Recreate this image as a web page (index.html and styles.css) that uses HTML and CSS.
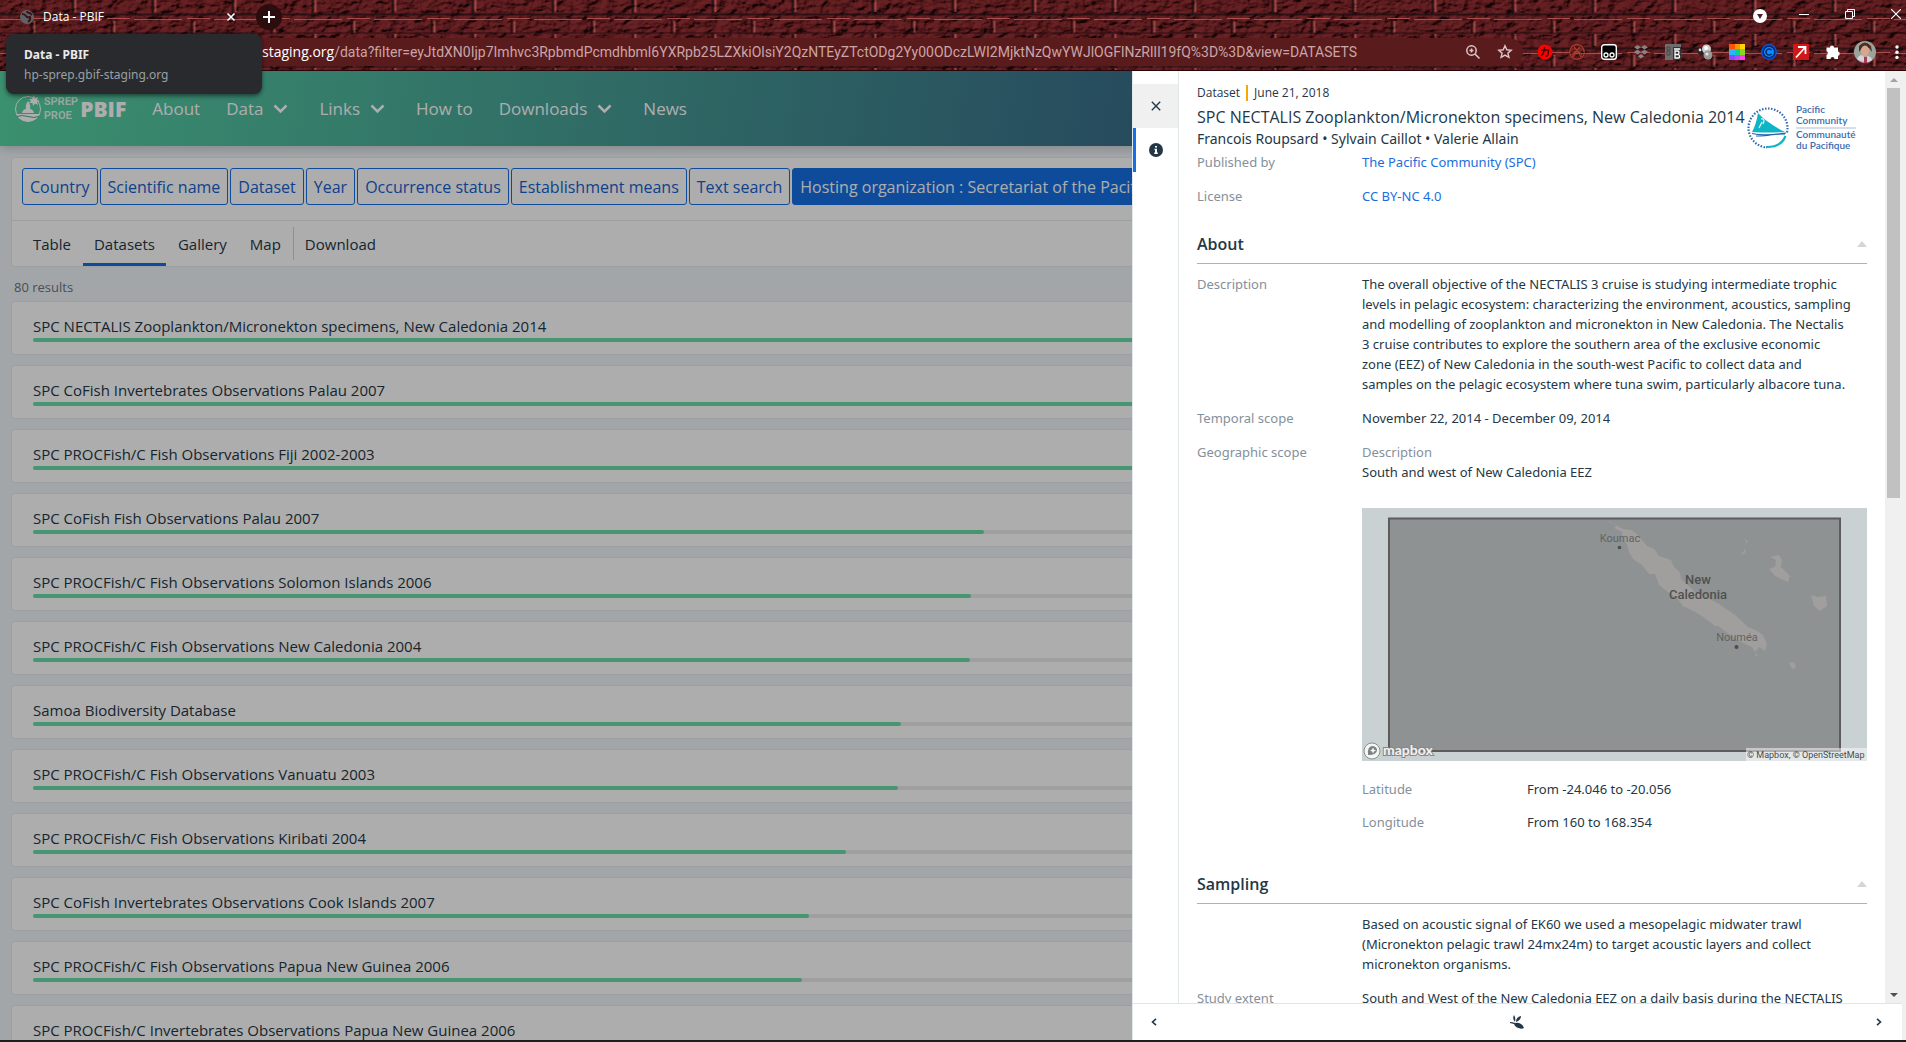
FILE: index.html
```html
<!DOCTYPE html>
<html lang="en">
<head>
<meta charset="utf-8">
<title>Data - PBIF</title>
<link rel="stylesheet" href="styles.css">
</head>
<body>
<header class="browser">
  <svg class="bricks" aria-hidden="true">
    <defs>
      <filter id="grain" x="0" y="0" width="100%" height="100%">
        <feTurbulence type="fractalNoise" baseFrequency="0.09 0.16" numOctaves="3" seed="4" result="n"/>
        <feDiffuseLighting in="n" surfaceScale="5" diffuseConstant="1" lighting-color="#76262a">
          <feDistantLight azimuth="225" elevation="42"/>
        </feDiffuseLighting>
      </filter>
      <pattern id="wall" width="80" height="34" patternUnits="userSpaceOnUse">
        <path d="M0 14.500H80M72.500 0V14M31.500 19V34" stroke="#1c0b10" stroke-width="2" opacity=".75"/>
        <path d="M0 19.500H22M27 18.500H50M54 19.500H80" stroke="#c0605c" stroke-width="1" opacity=".75"/>
        <path d="M75.500 0V12M34.500 21V33" stroke="#c0605c" stroke-width="2" opacity=".6"/>
        <path d="M0 33H80" stroke="#1c0b10" stroke-width="2" opacity=".4"/>
      </pattern>
    </defs>
    <rect width="100%" height="100%" fill="#4c1719"/>
    <rect width="100%" height="100%" filter="url(#grain)" opacity=".75"/>
    <rect width="100%" height="100%" fill="url(#wall)"/>
  </svg>
  <div class="tabstrip">
    <div class="tab">
      <svg width="14" height="14" viewBox="0 0 14 14"><circle cx="7" cy="7" r="7" fill="#5f6368"/><path d="M2 4q3 0 4 2t4 1q1 3-2 5M7 1q0 2 3 2l2 2" fill="none" stroke="#3a1517" stroke-width="2"/></svg>
      <span class="tab-title">Data - PBIF</span>
      <button class="bare" aria-label="Close tab"><svg width="10" height="10" viewBox="0 0 10 10"><path d="M1.500 1.500l7 7m0-7l-7 7" stroke="#fff" stroke-width="1.600"/></svg></button>
    </div>
    <button class="bare newtab" aria-label="New tab"><svg width="12" height="12" viewBox="0 0 12 12"><path d="M6 0v12M0 6h12" stroke="#fff" stroke-width="2"/></svg></button>
    <div class="window-buttons">
      <button class="bare tab-search" aria-label="Search tabs"><svg width="16" height="18" viewBox="0 0 16 18"><circle cx="8" cy="11" r="7" fill="#fff"/><path d="M5 9h6l-3 5z" fill="#5a1a1c"/></svg></button>
      <button class="bare" aria-label="Minimize"><svg width="10" height="10" viewBox="0 0 10 10"><path d="M0 5.500h10" stroke="#fff"/></svg></button>
      <button class="bare" aria-label="Restore"><svg width="10" height="10" viewBox="0 0 10 10"><path d="M.5 2.500h7v7h-7zM2.500 2.500v-2h7v7h-2" fill="none" stroke="#fff"/></svg></button>
      <button class="bare" aria-label="Close"><svg width="10" height="10" viewBox="0 0 10 10"><path d="M0 0l10 10M10 0L0 10" stroke="#fff" stroke-width="1.200"/></svg></button>
    </div>
  </div>
  <div class="toolbar">
    <div class="address">
      <label class="host" for="url">staging.org</label>
      <input id="url" type="text" value="/data?filter=eyJtdXN0Ijp7Imhvc3RpbmdPcmdhbml6YXRpb25LZXkiOlsiY2QzNTEyZTctODg2Yy00ODczLWI2MjktNzQwYWJlOGFlNzRlIl19fQ%3D%3D&amp;view=DATASETS">
      <button class="bare" aria-label="Zoom"><svg width="16" height="16" viewBox="0 0 16 16" fill="none" stroke="#dcc8c8" stroke-width="1.500"><circle cx="6.500" cy="6.500" r="4.700"/><path d="M10 10l4.500 4.500M4.500 6.500h4M6.500 4.500v4"/></svg></button>
      <button class="bare" aria-label="Bookmark"><svg width="16" height="16" viewBox="0 0 16 16" fill="none" stroke="#dcc8c8" stroke-width="1.400"><path d="M8 1.800l1.800 4 4.400.4-3.300 2.900 1 4.300L8 11.100l-3.900 2.300 1-4.300L1.800 6.200l4.400-.4z"/></svg></button>
    </div>
    <div class="extensions">
      <button class="bare" aria-label="Extension"><svg width="16" height="16" viewBox="0 0 16 16"><circle cx="8" cy="8" r="7.500" fill="#f00"/><path d="M4 6h7.500q0 5-1.500 6H8.500M7.500 3q0 6-3.500 9" fill="none" stroke="#400" stroke-width="1.500"/></svg></button>
      <button class="bare" aria-label="Extension"><svg width="16" height="16" viewBox="0 0 16 16" fill="none" stroke="#b03a2c" stroke-width="1.200"><circle cx="8" cy="8" r="7.300"/><path d="M2 5h5l5 8M14 5H9l-5 8M5 3l8 8M11 3l-8 8"/></svg></button>
      <button class="bare" aria-label="Extension"><svg width="16" height="16" viewBox="0 0 16 16"><rect x=".7" y=".7" width="14.600" height="14.600" rx="2.500" fill="#000" stroke="#fff" stroke-width="1.400"/><g fill="#000" stroke="#fff" stroke-width="1.300"><circle cx="5" cy="11" r="2"/><circle cx="11" cy="11" r="2"/></g></svg></button>
      <button class="bare" aria-label="Extension"><svg width="16" height="16" viewBox="0 0 16 16" fill="#8b8285"><path d="M4.500 1L8 3.300 4.500 5.600 1 3.300zM11.500 1L15 3.300l-3.500 2.300L8 3.300zM4.500 5.800L8 8.100l-3.500 2.300L1 8.100zM11.500 5.800L15 8.100l-3.500 2.300L8 8.100zM8 10l3.300 2.200L8 14.600l-3.300-2.400z"/></svg></button>
      <button class="bare" aria-label="Extension"><svg width="16" height="16" viewBox="0 0 16 16"><path fill="#6d6d6d" d="M0 0h16v16H0z"/><path d="M2 3h3v3H2zM2 7h3v4H2z" fill="none" stroke="#484848"/><path fill="#333" d="M8 3h8v13H8z"/><path d="M10 7h3q1 0 1 1.500T13 10.500h-3zM10 10.500h3.500q1 .3 1 2t-1 1.500H10zM9 5h6" fill="none" stroke="#fff" stroke-width="1.300"/></svg></button>
      <button class="bare" aria-label="Extension"><svg width="16" height="16" viewBox="0 0 16 16"><circle cx="4" cy="7" r="3.500" fill="#222"/><circle cx="3" cy="6" r="1.400" fill="#ddd"/><circle cx="9.500" cy="5" r="4.500" fill="#ccc"/><circle cx="11" cy="11" r="4.500" fill="#999"/><circle cx="9" cy="4" r="2" fill="#fff"/><circle cx="10" cy="10" r="1.600" fill="#e4e4e4"/></svg></button>
      <button class="bare" aria-label="Extension"><svg width="16" height="16" viewBox="0 0 16 16"><path fill="#ff5400" d="M0 0h6v5H0z"/><path fill="#ff9800" d="M6 0h5v5H6z"/><path fill="#ffd400" d="M11 0h5v5h-5z"/><path fill="#28b4ff" d="M0 5h6v6H0z"/><path fill="#00d890" d="M6 5h5v6H6z"/><path fill="#88d820" d="M11 5h5v6h-5z"/><path fill="#8a48ff" d="M0 11h6v5H0z"/><path fill="#c048f0" d="M6 11h5v5H6z"/><path fill="#ff40f0" d="M11 11h5v5h-5z"/></svg></button>
      <button class="bare" aria-label="Extension"><svg width="16" height="16" viewBox="0 0 16 16"><circle cx="8" cy="8" r="7.300" fill="#062a70" stroke="#0a58e8" stroke-width="1.300"/><circle cx="8" cy="8" r="5" fill="#0b8cff"/><path d="M10.500 6.300a3 3 0 1 0 0 3.400" fill="none" stroke="#062a70" stroke-width="1.600"/></svg></button>
      <button class="bare" aria-label="Extension"><svg width="16" height="16" viewBox="0 0 16 16"><path fill="#d01818" d="M0 0h16v16H0z"/><path d="M3 13.500l9-10M5 3h7.500v7" fill="none" stroke="#fff" stroke-width="1.800"/></svg></button>
      <button class="bare" aria-label="Extensions"><svg width="16" height="16" viewBox="0 0 16 16"><path fill="#fff" d="M5 3.500a2 2 0 0 1 4 0h4v4a2.200 2.200 0 0 1 0 4.300v3.200H9.500a2 2 0 0 0-4 0H1.500v-4a2 2 0 0 0 0-3.800V3.500z"/></svg></button>
      <button class="bare profile" aria-label="Profile"><svg width="22" height="22" viewBox="0 0 22 22"><circle cx="11" cy="11" r="11" fill="#9aa39c"/><path d="M5 5q6-7 12 0l1 6-3-4H8l-3 4z" fill="#4a3020"/><ellipse cx="11" cy="10" rx="4" ry="5.500" fill="#d9a58c"/><path d="M3 18q2-4 5-4l3 3 3-2q4 1 4 4-7 5-15-1z" fill="#d8d2dc"/><path d="M10 16h3v6h-3z" fill="#a83a58"/></svg></button>
      <button class="bare menu" aria-label="Menu"><svg width="4" height="16" viewBox="0 0 4 16" fill="#fff"><circle cx="2" cy="3" r="1.700"/><circle cx="2" cy="8.200" r="1.700"/><circle cx="2" cy="13.400" r="1.700"/></svg></button>
    </div>
  </div>
  <div class="tab-tooltip" role="tooltip"><strong>Data - PBIF</strong><span>hp-sprep.gbif-staging.org</span></div>
</header>

<div class="viewport">
  <div class="page">
    <nav class="site-nav">
      <a class="brand" href="#">
        <svg width="28" height="28" viewBox="0 0 28 28"><circle cx="14" cy="14" r="12.500" fill="none" stroke="#fff"/><path d="M2 19h24q-3 7-12 7.500Q5 26 2 19z" fill="#fff"/><path d="M3 21.500q5-2 11 0t11 0" fill="none" stroke="#4aa898"/><path d="M8 18q1-4 4-4-1-4 2-8 3 4 2 8 3 0 4 4z" fill="#fff"/><path d="M20 0l1 3 3-1-1 3 3 1-3 1 1 3-3-1.500L19 11l-.500-3L15 8l2-2-2-2 3 0z" fill="#fff"/></svg>
        <span class="brand-sub">SPREP<br>PROE</span>
        <span class="brand-name">PBIF</span>
      </a>
      <a href="#">About</a>
      <a href="#">Data <svg class="chev" viewBox="0 0 15 9"><path d="M1.500 1.500l6 6 6-6"/></svg></a>
      <a href="#">Links <svg class="chev" viewBox="0 0 15 9"><path d="M1.500 1.500l6 6 6-6"/></svg></a>
      <a href="#">How to</a>
      <a href="#">Downloads <svg class="chev" viewBox="0 0 15 9"><path d="M1.500 1.500l6 6 6-6"/></svg></a>
      <a href="#">News</a>
    </nav>
    <main class="results">
      <section class="panel">
        <div class="filters">
          <button>Country</button><button>Scientific name</button><button>Dataset</button><button>Year</button><button>Occurrence status</button><button>Establishment means</button><button>Text search</button><button class="on">Hosting organization : Secretariat of the Pacific</button>
        </div>
        <div class="views">
          <a href="#">Table</a><a href="#" class="active">Datasets</a><a href="#">Gallery</a><a href="#">Map</a><a href="#" class="download">Download</a>
        </div>
      </section>
      <p class="count">80 results</p>
      <ul class="datasets">
        <li><a href="#">SPC NECTALIS Zooplankton/Micronekton specimens, New Caledonia 2014</a><div class="track"><div style="width:100%"></div></div></li>
        <li><a href="#">SPC CoFish Invertebrates Observations Palau 2007</a><div class="track"><div style="width:80%"></div></div></li>
        <li><a href="#">SPC PROCFish/C Fish Observations Fiji 2002-2003</a><div class="track"><div style="width:66%"></div></div></li>
        <li><a href="#">SPC CoFish Fish Observations Palau 2007</a><div class="track"><div style="width:51.7%"></div></div></li>
        <li><a href="#">SPC PROCFish/C Fish Observations Solomon Islands 2006</a><div class="track"><div style="width:51%"></div></div></li>
        <li><a href="#">SPC PROCFish/C Fish Observations New Caledonia 2004</a><div class="track"><div style="width:50.9%"></div></div></li>
        <li><a href="#">Samoa Biodiversity Database</a><div class="track"><div style="width:47.2%"></div></div></li>
        <li><a href="#">SPC PROCFish/C Fish Observations Vanuatu 2003</a><div class="track"><div style="width:47%"></div></div></li>
        <li><a href="#">SPC PROCFish/C Fish Observations Kiribati 2004</a><div class="track"><div style="width:44.2%"></div></div></li>
        <li><a href="#">SPC CoFish Invertebrates Observations Cook Islands 2007</a><div class="track"><div style="width:42.2%"></div></div></li>
        <li><a href="#">SPC PROCFish/C Fish Observations Papua New Guinea 2006</a><div class="track"><div style="width:41.8%"></div></div></li>
        <li><a href="#">SPC PROCFish/C Invertebrates Observations Papua New Guinea 2006</a><div class="track"><div style="width:40%"></div></div></li>
      </ul>
    </main>
  </div>
  <div class="scrim"></div>
  <aside class="drawer">
    <div class="drawer-main">
      <div class="rail">
        <button class="rail-close" aria-label="Close"><svg width="10" height="10" viewBox="0 0 10 10"><path d="M.8.8l8.400 8.400m0-8.400L.8 9.200" stroke="#243746" stroke-width="1.400"/></svg></button>
        <button class="rail-info" aria-label="Info"><svg width="14" height="14" viewBox="0 0 14 14"><circle cx="7" cy="7" r="7" fill="#243746"/><path d="M6 3h2v1.600H6zM5.500 5.800H8V9.500h.8V11H5.200V9.500H6V7h-.5z" fill="#fff"/></svg></button>
      </div>
      <div class="detail">
        <div class="detail-head">
          <div>
            <p class="kind"><span>Dataset</span><time>June 21, 2018</time></p>
            <h1>SPC NECTALIS Zooplankton/Micronekton specimens, New Caledonia 2014</h1>
            <p class="authors">Francois Roupsard • Sylvain Caillot • Valerie Allain</p>
          </div>
          <svg class="org-logo" width="110" height="50" viewBox="0 -3 110 50" role="img" aria-label="Pacific Community">
            <circle cx="21" cy="22" r="19.500" fill="none" stroke="#3568b0" stroke-width="2.200" stroke-dasharray="2 2" pathLength="160"/>
            <path d="M40 27Q36 41 20 42" fill="none" stroke="#fff" stroke-width="5"/>
            <path d="M38.500 30Q34 41.500 19 41" fill="none" stroke="#10b5c5" stroke-width="2.200"/>
            <path d="M11 7q9 10 27 19-18 1-33 0Q9 19 11 7z" fill="#10b5c5"/>
            <path d="M12 22l3-6m-1-3q3-1 3 2l-1 3" stroke="#d8f4f6" stroke-width="1.300" fill="none"/>
            <path d="M5 27.500q12 3 34-.5M9 30q10 0 14-1 8-1 15-1" fill="none" stroke="#2a62a8" stroke-width="1.200"/>
            <path d="M49 22h60" stroke="#a9bddc" stroke-width="1"/>
            <g class="org-text"><text x="49" y="7">Pacific</text><text x="49" y="18">Community</text><text x="49" y="32">Communauté</text><text x="49" y="43">du Pacifique</text></g>
          </svg>
        </div>
        <dl class="facts">
          <dt>Published by</dt><dd><a href="#">The Pacific Community (SPC)</a></dd>
          <dt>License</dt><dd><a href="#">CC BY-NC 4.0</a></dd>
        </dl>
        <h2>About <span class="fold"></span></h2>
        <dl class="facts">
          <dt>Description</dt><dd class="prose">The overall objective of the NECTALIS 3 cruise is studying intermediate trophic levels in pelagic ecosystem: characterizing the environment, acoustics, sampling and modelling of zooplankton and micronekton in New Caledonia. The Nectalis 3 cruise contributes to explore the southern area of the exclusive economic zone (EEZ) of New Caledonia in the south-west Pacific to collect data and samples on the pelagic ecosystem where tuna swim, particularly albacore tuna.</dd>
          <dt>Temporal scope</dt><dd>November 22, 2014 - December 09, 2014</dd>
          <dt>Geographic scope</dt>
          <dd>
            <div class="muted">Description</div>
            <div>South and west of New Caledonia EEZ</div>
            <svg class="map" viewBox="0 0 505 253" role="img" aria-label="Map of New Caledonia">
              <path fill="#c9d1d3" d="M0 0h505v253H0z"/>
              <path fill="#8e9292" stroke="#5c5c5c" stroke-width="2" d="M27 10.500h451v232.500H27z"/>
              <g fill="#a09f9d">
                <path d="M244 12l5 3 5 2 7 4 8 1 6 4 10 12 7 3 5 7 12 4 3 7 6 5 1 7 6 5 9 9 10 4 13 7 16 11 13 12 9 4 6 4 4 9-2 7-6-4-4 5-3-5-9-4-6-3-8-6-11-8-3 0-13-10-9-5-10-5-7-9-6-3-2-2-9-7-4-11-6 0-7-9-9-6-4-7-2-8-4-4-1-8-8-4 3-3z"/>
                <path d="M408 49l9-2 3 5-1 7 9 9-2 6-9-4-4-2-6-7 6-2 1-7z"/>
                <path d="M449 87l7 2 8-1 1 10-7 5-6-5z"/>
                <path d="M427 155l5-1 2 6-4 1zM383 30l3 4-2 1zM384 40l-1 5-5 2 3-3zM393 146l3 0-2 3z"/>
              </g>
              <g class="map-labels">
                <text x="258" y="34">Koumac</text><text x="375" y="133">Nouméa</text>
                <g class="country"><text x="336" y="76">New</text><text x="336" y="91">Caledonia</text></g>
              </g>
              <circle cx="257.500" cy="39.500" r="1.800" fill="#4d4d4d"/><circle cx="374.500" cy="139" r="2" fill="#4d4d4d"/>
              <circle cx="10" cy="243" r="8" fill="#f4f5f5" stroke="#777" stroke-width=".8"/><path d="M6 247q-1-9 5-9 4 1 4 4 0 5-9 5z" fill="#7b8080"/><path d="M11 239.500l1 2 2 1-2 1-1 2-1-2-2-1 2-1z" fill="#f4f5f5"/>
              <text class="map-brand" x="21" y="247">mapbox</text>
              <path fill="#fff" opacity=".5" d="M384 240h121v13H384z"/>
              <text class="map-credit" x="385" y="250">© Mapbox, © OpenStreetMap</text>
            </svg>
            <dl class="facts inner">
              <dt>Latitude</dt><dd>From -24.046 to -20.056</dd>
              <dt>Longitude</dt><dd>From 160 to 168.354</dd>
            </dl>
          </dd>
        </dl>
        <h2>Sampling <span class="fold"></span></h2>
        <dl class="facts">
          <dt></dt><dd class="prose">Based on acoustic signal of EK60 we used a mesopelagic midwater trawl (Micronekton pelagic trawl 24mx24m) to target acoustic layers and collect micronekton organisms.</dd>
          <dt>Study extent</dt><dd>South and West of the New Caledonia EEZ on a daily basis during the NECTALIS</dd>
        </dl>
      </div>
      <div class="scrollbar" aria-hidden="true"><span class="up"></span><span class="thumb"></span><span class="down"></span></div>
    </div>
    <div class="drawer-foot">
      <button class="bare" aria-label="Previous"><svg width="6" height="8" viewBox="0 0 6 8"><path d="M5 .8L1.500 4 5 7.200" fill="none" stroke="#243746" stroke-width="1.600"/></svg></button>
      <svg width="14" height="14" viewBox="0 0 14 14" fill="#243746"><path d="M4 0q2 3 1 7Q2 4 4 0zM11 1q0 4-5 6 0-5 5-6zM0 7q3 0 5 1 3-1 6 1 2 1 3 4-3 1.500-7-.5Q5 12 4 9L0 8z"/></svg>
      <button class="bare" aria-label="Next"><svg width="6" height="8" viewBox="0 0 6 8"><path d="M1 .8L4.500 4 1 7.200" fill="none" stroke="#243746" stroke-width="1.600"/></svg></button>
    </div>
  </aside>
</div>
<div class="taskbar"></div>
</body>
</html>
```
FILE: styles.css
```css
* { box-sizing: border-box; }
body {
  margin: 0;
  height: 100vh;
  display: flex;
  flex-direction: column;
  overflow: hidden;
  font-family: "Open Sans", "Noto Sans", sans-serif;
  font-size: 13px;
  line-height: 20px;
  color: #243746;
}
p, h1, h2, ul, dl, dd { margin: 0; padding: 0; }
a { color: inherit; text-decoration: none; }
svg { display: block; flex: none; }
button { font: inherit; color: inherit; cursor: pointer; }
.bare { display: flex; align-items: center; justify-content: center; padding: 0; border: 0; background: none; }

/* browser frame */
.browser { position: relative; flex: none; height: 71px; border-bottom: 1px solid #2a0507; z-index: 3; }
.bricks { position: absolute; inset: 0; width: 100%; height: 100%; }
.tabstrip, .toolbar { position: relative; display: flex; align-items: center; }
.tabstrip { height: 34px; font-size: 12px; color: #fff; }
.tab { display: flex; align-items: center; gap: 9px; width: 236px; padding-left: 20px; }
.tab-title { flex: 1; }
.newtab { margin-left: 20px; width: 26px; height: 26px; border-radius: 13px; background: #2b0d10; }
.window-buttons { display: flex; gap: 36px; margin-left: auto; padding: 0 5px 6px 0; }
.tab-search { margin-right: -5px; }
.toolbar { height: 36px; gap: 14px; padding-right: 7px; }
.address {
  flex: 1;
  display: flex;
  align-items: center;
  gap: 16px;
  height: 28px;
  margin-left: 36px;
  padding: 0 10px 0 226px;
  border-radius: 14px;
  background: #5a1b1d;
  font-size: 14px;
}
.host { color: #fff; }
.address input { flex: 1; min-width: 0; margin-left: -16px; padding: 0; border: 0; outline: 0; background: none; font: 14px Roboto, "Open Sans", sans-serif; color: #c9a5a6; }
.extensions { display: flex; align-items: center; gap: 16px; }
.profile { margin: 0 -3px; }
.menu { margin-left: 6px; }
.tab-tooltip {
  position: absolute;
  left: 6px;
  top: 34px;
  width: 256px;
  height: 60px;
  padding: 11px 18px;
  display: flex;
  flex-direction: column;
  border-radius: 8px;
  background: #292a2d;
  box-shadow: 0 2px 4px rgba(0, 0, 0, .5);
  font-family: "Noto Sans", "Open Sans", sans-serif;
  font-size: 12px;
  color: #e8eaed;
}
.tab-tooltip span { color: #9aa0a6; }
.taskbar { flex: none; height: 2px; background: #1e1e20; }

/* page */
.viewport { position: relative; flex: 1; min-height: 0; overflow: hidden; }
.page { height: 100%; overflow: hidden; background: #f0f5f9; }
.site-nav {
  display: flex;
  align-items: center;
  gap: 26px;
  height: 75px;
  padding-left: 14px;
  background: linear-gradient(100deg, #57d5a4, #386b89 62%, #30506f);
  box-shadow: 0 2px 10px rgba(0, 0, 0, .2);
  font-size: 17px;
  color: #fff;
}
.site-nav a { display: flex; align-items: center; gap: 10px; }
.site-nav .brand { gap: 2px; }
.brand-sub { font: 700 11px/14px Roboto, sans-serif; opacity: .8; }
.brand-name { font-size: 21px; font-weight: 800; }
.chev { width: 15px; height: 9px; margin-right: 5px; fill: none; stroke: #fff; stroke-width: 2.5px; }
.results { padding: 11px; }
.panel { border: 1px solid #e6eaec; border-radius: 3px; background: #fff; overflow: hidden; }
.filters { display: flex; gap: 2px; padding: 10px 10px 15px; border-bottom: 1px solid #e6eaec; }
.filters button {
  flex: none;
  height: 37px;
  padding: 0 7px;
  border: 1px solid #1670e5;
  border-radius: 3px;
  background: none;
  font-size: 16px;
  color: #1661cf;
  white-space: nowrap;
}
.filters .on { background: #1670e5; color: #fff; }
.views { display: flex; align-items: center; gap: 1px; height: 45px; padding: 0 10px; font-size: 15px; }
.views a { height: 45px; padding: 0 11px; line-height: 46px; }
.views .active { box-shadow: inset 0 -3px #1670e5; }
.views .download { height: 33px; line-height: 34px; border-left: 1px solid #d0d4d8; }
.count { padding: 10px 3px 4px; color: #6c757d; }
.datasets { display: grid; gap: 10px; list-style: none; }
.datasets li { height: 54px; padding: 12px 21px 0; border: 1px solid #e6eaec; border-radius: 3px; background: #fff; font-size: 15px; }
.datasets a { display: block; line-height: 24px; }
.track { height: 4px; border-radius: 2px; background: #eaeaea; }
.track div { height: 4px; border-radius: 2px; background: #67dda8; }
.scrim { position: absolute; inset: 0; background: rgba(0, 0, 0, .32); }

/* detail drawer */
.drawer {
  position: absolute;
  top: 0;
  right: 0;
  bottom: 0;
  width: 774px;
  display: flex;
  flex-direction: column;
  border-left: 1px solid #e3e8ea;
  border-right: 4px solid #f0f0f0;
  background: #fff;
}
.drawer-main { flex: 1; min-height: 0; display: flex; }
.rail { flex: none; width: 46px; padding-top: 13px; border-right: 1px solid #e0e8e9; }
.rail button { display: flex; align-items: center; justify-content: center; width: 45px; height: 44px; padding: 0; border: 0; background: #f0f0f0; }
.rail .rail-info { background: none; border-left: 3px solid #1670e5; border-right: 3px solid #fff; }
.detail { flex: 1; min-width: 0; padding: 11px 18px 0; overflow: hidden; }
.detail-head { display: flex; gap: 12px; align-items: center; padding-right: 10px; }
.detail-head > div { flex: 1; white-space: nowrap; min-width: 0; }
.kind { display: flex; font-size: 12px; line-height: 22px; }
.kind span { padding-right: 6px; margin: 3px 6px 3px 0; border-right: 2px solid #f6a800; line-height: 16px; }
h1 { font-size: 16px; line-height: 26px; font-weight: 400; }
.authors { font-family: "Noto Sans", "Open Sans", sans-serif; font-size: 14px; line-height: 18px; }
.org-logo { margin-top: 20px; margin-bottom: -6px; }
.org-text text { font: 600 10px Lato, "Open Sans", sans-serif; fill: #3a6bb0; }
.facts { display: grid; grid-template-columns: 165px 1fr; row-gap: 14px; font-family: "Noto Sans", "Open Sans", sans-serif; }
.facts > dt, .muted { color: #84909b; }
.facts > dd { min-width: 0; }
.facts > .prose { padding-right: 16px; }
.facts dd a { color: #1a6ee0; }
.detail-head + .facts { padding-top: 4px; }
h2 { display: flex; align-items: center; justify-content: space-between; margin: 18px 0 10px; height: 40px; border-bottom: 1px solid #a9b3bd; font-size: 16px; font-weight: 600; }
.fold { border: 5px solid transparent; border-top: 0; border-bottom: 6px solid #d4d7d9; }
.map { width: 100%; height: auto; margin: 26px 0 18px; }
.inner { margin-bottom: 31px; row-gap: 13px; }
.map-labels { font: 11px Roboto, "Open Sans", sans-serif; fill: #636363; text-anchor: middle; }
.country { font-size: 13px; font-weight: 500; fill: #505050; }
.map-brand { font: 700 14px Lato, sans-serif; fill: #f2f3f3; stroke: #888; stroke-width: 2px; paint-order: stroke; }
.map-credit { font: 9px Roboto, "Open Sans", sans-serif; fill: #4c4c4c; }
.inner + h2, .facts .inner { margin-bottom: 14px; }
.scrollbar { flex: none; width: 17px; display: flex; flex-direction: column; align-items: center; background: #f0f0f0; }
.up { border: 4px solid transparent; border-top: 0; border-bottom: 4px solid #a3a3a3; margin: 7px 0 6px; }
.thumb { width: 13px; height: 44%; background: #c1c1c1; }
.down { margin-top: auto; margin-bottom: 6px; border: 4px solid transparent; border-bottom: 0; border-top: 4px solid #505050; }
.drawer-foot { flex: none; display: flex; align-items: center; justify-content: space-between; height: 37px; padding: 0 20px 0 18px; border-top: 1px solid #e0e4e6; }
```
